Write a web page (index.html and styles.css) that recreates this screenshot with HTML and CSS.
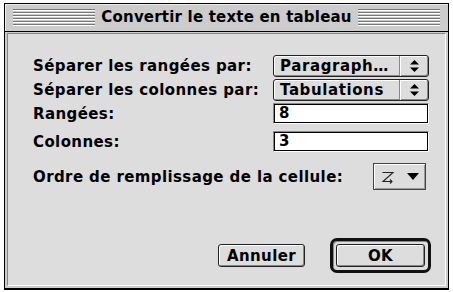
FILE: index.html
```html
<!DOCTYPE html>
<html lang="fr">
<head>
<meta charset="utf-8">
<link rel="stylesheet" href="styles.css">
</head>
<body>
<div class="window">
  <div class="titlebar">
    <span class="stripes"></span>
    <span class="title">Convertir le texte en tableau</span>
    <span class="stripes"></span>
  </div>
  <div class="content">
    <div class="form">
      <span class="label">Séparer les rangées par:</span>
      <div class="popup"><span class="popup-text">Paragraph…</span><span class="popup-arrows"><svg width="9" height="12" viewBox="0 0 9 12"><path d="M4.5 0 L9 4.5 H0 Z M0 7.5 H9 L4.5 12 Z" fill="#000"/></svg></span></div>
      <span class="label">Séparer les colonnes par:</span>
      <div class="popup"><span class="popup-text">Tabulations</span><span class="popup-arrows"><svg width="9" height="12" viewBox="0 0 9 12"><path d="M4.5 0 L9 4.5 H0 Z M0 7.5 H9 L4.5 12 Z" fill="#000"/></svg></span></div>
      <span class="label">Rangées:</span>
      <div class="field">8</div>
      <span class="label label-gap">Colonnes:</span>
      <div class="field field-gap">3</div>
    </div>
    <div class="order-row">
      <span class="label">Ordre de remplissage de la cellule:</span>
      <div class="order">
        <svg width="14" height="14" viewBox="0 0 14 14"><path d="M1.5 2.5 H12 L2 11.5 H11 M9 9.5 L11 11.5 L9 13.5" fill="none" stroke="#222" stroke-width="1.1"/></svg>
        <svg width="12" height="7" viewBox="0 0 12 7"><path d="M0 0 H12 L6 7 Z" fill="#000"/></svg>
      </div>
    </div>
    <div class="buttons">
      <button class="btn btn-cancel">Annuler</button>
      <span class="default-ring"><button class="btn btn-ok">OK</button></span>
    </div>
  </div>
</div>
</body>
</html>
```

FILE: styles.css
```css
html, body {
  margin: 0;
  padding: 0;
  background: #ffffff;
}

body {
  font-family: "DejaVu Sans", "Liberation Sans", sans-serif;
  font-weight: bold;
  font-size: 15px;
  letter-spacing: 0.4px;
  color: #000;
}

.window {
  box-sizing: border-box;
  width: 445px;
  height: 287px;
  margin: 3px 0 0 4px;
  border: 1px solid #000;
  border-bottom-width: 2px;
  background: #cccccc;
  display: flex;
  flex-direction: column;
  padding: 0 2px 2px 2px;
}

.titlebar {
  height: 27px;
  border-bottom: 1px solid #000;
  margin: 0 -2px;
  padding: 0 8px;
  display: flex;
  align-items: center;
  gap: 6px;
  background: #cccccc;
  box-shadow: inset 1px 1px 0 #eeeeee;
}

.stripes {
  flex: 1;
  height: 17px;
  background: repeating-linear-gradient(to bottom, #777777 0 1px, #ffffff 1px 2px, #cccccc 2px 3px);
}

.title {
  font-size: 15px;
  letter-spacing: 0.2px;
  line-height: 27px;
}

.content {
  flex: 1;
  margin-top: 1px;
  border: 1px solid #888888;
  border-right-color: #ffffff;
  border-bottom-color: #ffffff;
  background: #dddddd;
  display: flex;
  flex-direction: column;
  padding: 21px 0 0 25px;
}

.form {
  display: grid;
  grid-template-columns: 240px 156px;
  row-gap: 2px;
  align-items: center;
}

.label {
  line-height: 20px;
  white-space: nowrap;
}

.popup {
  box-sizing: border-box;
  height: 22px;
  border: 1px solid #222;
  border-radius: 3px;
  background: #dddddd;
  box-shadow: inset 1px 1px 0 #ffffff, inset -1px -1px 0 #888888;
  display: flex;
  align-items: stretch;
}

.popup-text {
  flex: 1;
  padding-left: 6px;
  line-height: 20px;
  letter-spacing: 0.6px;
}

.popup-arrows {
  width: 28px;
  border-left: 1px solid #888888;
  box-shadow: inset 1px 0 0 #ffffff;
  display: flex;
  align-items: center;
  justify-content: center;
}

.field {
  box-sizing: border-box;
  height: 21px;
  border: 1px solid #888888;
  border-right-color: #ffffff;
  border-bottom-color: #ffffff;
  background: #ffffff;
  box-shadow: inset 1px 1px 0 #000, inset -1px -1px 0 #000;
  padding-left: 5px;
  line-height: 19px;
}

.label-gap, .field-gap {
  margin-top: 5px;
}

.order-row {
  margin-top: 11px;
  width: 393px;
  display: flex;
  justify-content: space-between;
  align-items: center;
}

.order {
  box-sizing: border-box;
  width: 53px;
  height: 27px;
  border: 1px solid #444;
  background: #dddddd;
  box-shadow: inset 1px 1px 0 #ffffff, inset -1px -1px 0 #999999;
  display: flex;
  align-items: center;
  justify-content: space-between;
  padding: 0 6px 0 7px;
}

.buttons {
  margin-top: auto;
  margin-bottom: 12px;
  padding-right: 14px;
  display: flex;
  justify-content: flex-end;
  align-items: center;
  gap: 25px;
}

.btn {
  box-sizing: border-box;
  font-family: "DejaVu Sans", "Liberation Sans", sans-serif;
  font-weight: bold;
  font-size: 15px;
  letter-spacing: 0.4px;
  color: #000;
  height: 23px;
  padding: 0;
  border: 1px solid #222;
  border-radius: 3px;
  background: #dddddd;
  box-shadow: inset 1px 1px 0 #ffffff, inset -1px -1px 0 #888888;
  margin: 0;
}

.btn-cancel {
  width: 87px;
}

.default-ring {
  display: flex;
  padding: 3px;
  border: 3px solid #111;
  border-radius: 7px;
  background: #dddddd;
  box-shadow: inset 1px 1px 0 #888888;
}

.btn-ok {
  width: 89px;
}
```
